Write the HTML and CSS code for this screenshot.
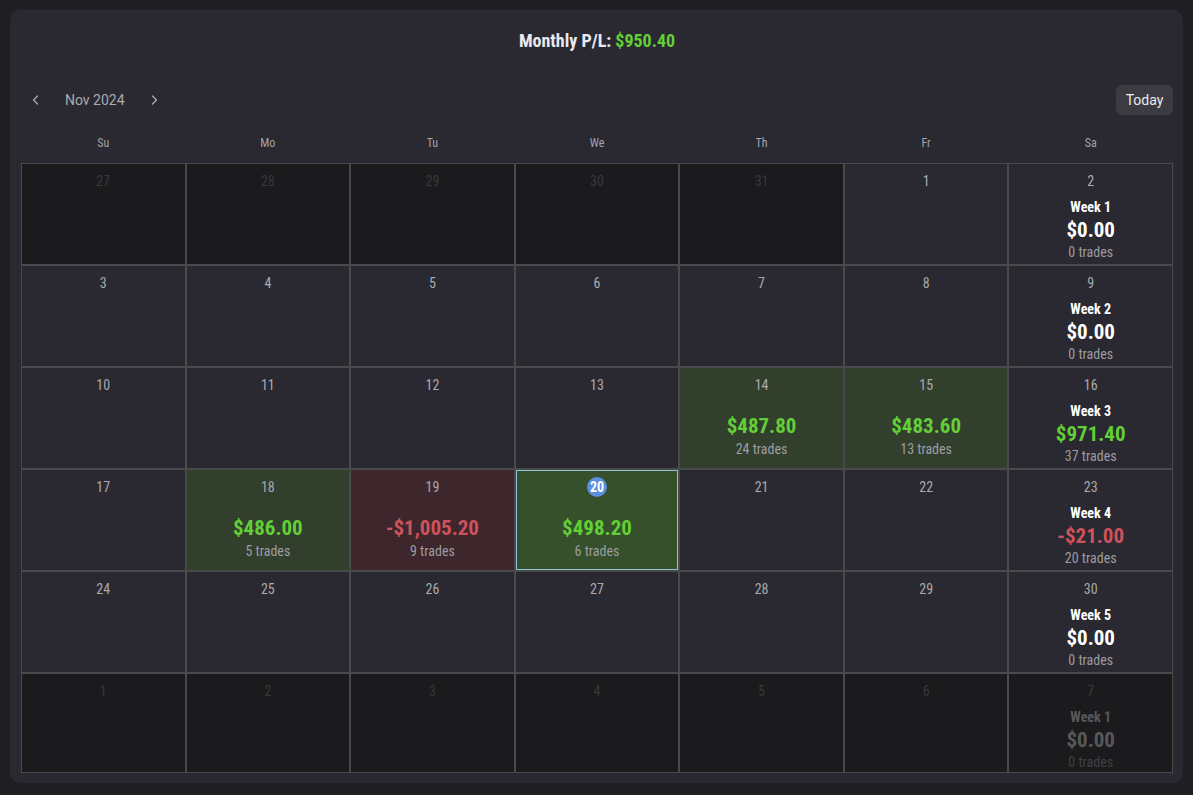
FILE: index.html
```html
<!DOCTYPE html>
<html lang="en">
<head>
<meta charset="utf-8">
<title>Trading Calendar</title>
<link rel="stylesheet" href="styles.css">
</head>
<body>
<div class="card">
  <div class="title">Monthly P/L: <span class="pos">$950.40</span></div>
  <div class="nav">
    <div class="nav-left">
      <button class="chev" aria-label="Previous month"><svg width="10" height="12" viewBox="0 0 10 12"><polyline points="6.5,2 2.5,6 6.5,10" fill="none" stroke="#a9a9b0" stroke-width="1.4" stroke-linecap="round" stroke-linejoin="round"/></svg></button>
      <span class="month">Nov 2024</span>
      <button class="chev" aria-label="Next month"><svg width="10" height="12" viewBox="0 0 10 12"><polyline points="3.5,2 7.5,6 3.5,10" fill="none" stroke="#a9a9b0" stroke-width="1.4" stroke-linecap="round" stroke-linejoin="round"/></svg></button>
    </div>
    <button class="today-btn">Today</button>
  </div>
  <div class="weekdays">
    <div>Su</div><div>Mo</div><div>Tu</div><div>We</div><div>Th</div><div>Fr</div><div>Sa</div>
  </div>
  <div class="grid">
    <div class="cell dim"><div class="num">27</div></div>
    <div class="cell dim"><div class="num">28</div></div>
    <div class="cell dim"><div class="num">29</div></div>
    <div class="cell dim"><div class="num">30</div></div>
    <div class="cell dim"><div class="num">31</div></div>
    <div class="cell"><div class="num">1</div></div>
    <div class="cell week"><div class="num">2</div><div class="wk">Week 1</div><div class="amt">$0.00</div><div class="trades">0 trades</div></div>
    <div class="cell"><div class="num">3</div></div>
    <div class="cell"><div class="num">4</div></div>
    <div class="cell"><div class="num">5</div></div>
    <div class="cell"><div class="num">6</div></div>
    <div class="cell"><div class="num">7</div></div>
    <div class="cell"><div class="num">8</div></div>
    <div class="cell week"><div class="num">9</div><div class="wk">Week 2</div><div class="amt">$0.00</div><div class="trades">0 trades</div></div>
    <div class="cell"><div class="num">10</div></div>
    <div class="cell"><div class="num">11</div></div>
    <div class="cell"><div class="num">12</div></div>
    <div class="cell"><div class="num">13</div></div>
    <div class="cell win"><div class="num">14</div><div class="amt day pos">$487.80</div><div class="trades">24 trades</div></div>
    <div class="cell win"><div class="num">15</div><div class="amt day pos">$483.60</div><div class="trades">13 trades</div></div>
    <div class="cell week"><div class="num">16</div><div class="wk">Week 3</div><div class="amt pos">$971.40</div><div class="trades">37 trades</div></div>
    <div class="cell"><div class="num">17</div></div>
    <div class="cell win"><div class="num">18</div><div class="amt day pos">$486.00</div><div class="trades">5 trades</div></div>
    <div class="cell loss"><div class="num">19</div><div class="amt day neg">-$1,005.20</div><div class="trades">9 trades</div></div>
    <div class="cell today"><div class="num"><span class="badge">20</span></div><div class="amt day pos">$498.20</div><div class="trades">6 trades</div></div>
    <div class="cell"><div class="num">21</div></div>
    <div class="cell"><div class="num">22</div></div>
    <div class="cell week"><div class="num">23</div><div class="wk">Week 4</div><div class="amt neg">-$21.00</div><div class="trades">20 trades</div></div>
    <div class="cell"><div class="num">24</div></div>
    <div class="cell"><div class="num">25</div></div>
    <div class="cell"><div class="num">26</div></div>
    <div class="cell"><div class="num">27</div></div>
    <div class="cell"><div class="num">28</div></div>
    <div class="cell"><div class="num">29</div></div>
    <div class="cell week"><div class="num">30</div><div class="wk">Week 5</div><div class="amt">$0.00</div><div class="trades">0 trades</div></div>
    <div class="cell dim"><div class="num">1</div></div>
    <div class="cell dim"><div class="num">2</div></div>
    <div class="cell dim"><div class="num">3</div></div>
    <div class="cell dim"><div class="num">4</div></div>
    <div class="cell dim"><div class="num">5</div></div>
    <div class="cell dim"><div class="num">6</div></div>
    <div class="cell dim week"><div class="num">7</div><div class="wk">Week 1</div><div class="amt">$0.00</div><div class="trades">0 trades</div></div>
  </div>
</div>
</body>
</html>
```
FILE: styles.css
```css
* { box-sizing: border-box; }
html, body { margin: 0; padding: 0; }
body {
  background: #1f1f23;
  font-family: "Roboto Condensed", Roboto, sans-serif;
  color: #e8e8ec;
  width: 1193px;
  height: 795px;
  overflow: hidden;
}
.card {
  margin: 10px;
  height: 773px;
  background: #2a2931;
  border-radius: 10px;
  padding: 19px 10px 0 11px;
  overflow: hidden;
}
.title {
  text-align: center;
  font-weight: 700;
  font-size: 18px;
  line-height: 24px;
  color: #e9e9f2;
}
.pos { color: #62cf37; }
.neg { color: #cf525c; }
.nav {
  margin-top: 32px;
  height: 30px;
  display: flex;
  align-items: center;
  justify-content: space-between;
}
.nav-left { display: flex; align-items: center; gap: 14px; }
.chev {
  width: 30px;
  height: 30px;
  background: none;
  border: 0;
  padding: 0;
  display: flex;
  align-items: center;
  justify-content: center;
}
.month {
  font-family: Roboto, "Liberation Sans", sans-serif;
  font-size: 14px;
  color: #a9a9b0;
}
.today-btn {
  font-family: Roboto, "Liberation Sans", sans-serif;
  font-size: 14px;
  color: #ececef;
  background: #3b3b41;
  border: 0;
  border-radius: 6px;
  height: 30px;
  width: 57px;
  padding: 0;
}
.weekdays {
  margin-top: 14px;
  height: 28px;
  margin-bottom: 6px;
  display: grid;
  grid-template-columns: repeat(7, 1fr);
  align-items: center;
  text-align: center;
  font-size: 12px;
  color: #a3a3aa;
}
.grid {
  display: grid;
  grid-template-columns: repeat(7, 1fr);
  grid-template-rows: repeat(5, 102px) 100px;
}
.cell {
  border: 1px solid #4a4a4c;
  background: #2a2931;
  text-align: center;
  padding-top: 8px;
  display: flex;
  flex-direction: column;
  align-items: center;
}
.cell.dim { background: #1b1b1d; }
.cell.win { background: #333f2d; }
.cell.loss { background: #3d272c; }
.cell.today { background: #35502a; box-shadow: inset 0 0 0 1px #8ec5d6; }
.num {
  font-size: 14px;
  line-height: 18px;
  height: 18px;
  color: #a9a9ae;
}
.dim .num { color: #38383b; }
.badge {
  display: inline-flex;
  align-items: center;
  justify-content: center;
  width: 20px;
  height: 20px;
  margin-top: -1px;
  border-radius: 50%;
  background: #5b8fe0;
  color: #ffffff;
  font-weight: 700;
  font-size: 14px;
}
.wk {
  margin-top: 9px;
  font-size: 14px;
  font-weight: 700;
  line-height: 16px;
  color: #ffffff;
}
.amt {
  margin-top: 3px;
  font-size: 21px;
  font-weight: 700;
  line-height: 24px;
  color: #ffffff;
}
.amt.pos { color: #62cf37; }
.amt.neg { color: #cf525c; }
.amt.day { margin-top: 20px; }
.trades {
  margin-top: 2px;
  font-size: 14px;
  line-height: 16px;
  color: #9c9ca2;
}
.amt.day + .trades { margin-top: 3px; }
.dim .wk, .dim .amt { color: #58585b; }
.dim .trades { color: #404043; }
```
